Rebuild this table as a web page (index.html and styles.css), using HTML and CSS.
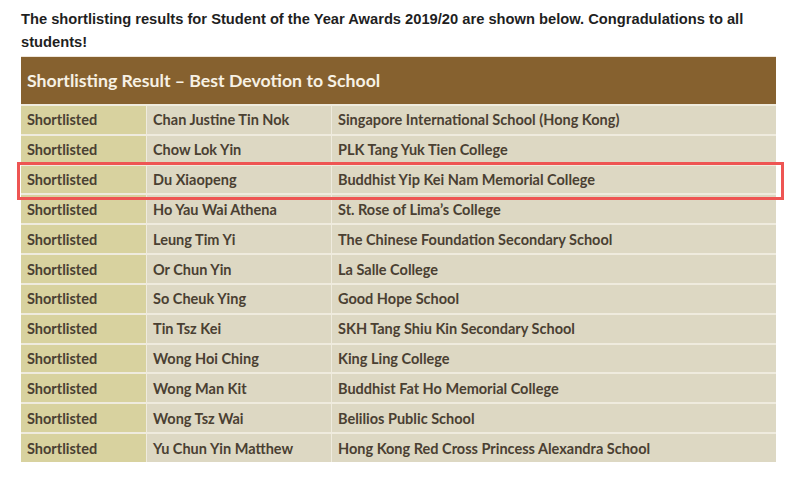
FILE: index.html
```html
<!DOCTYPE html>
<html>
<head>
<meta charset="utf-8">
<link rel="stylesheet" href="styles.css">
</head>
<body>
<p class="intro">The shortlisting results for Student of the Year Awards 2019/20 are shown below. Congradulations to all students!</p>
<div class="result">
  <div class="title">Shortlisting Result – Best Devotion to School</div>
  <div class="row"><div class="c1">Shortlisted</div><div class="c2">Chan Justine Tin Nok</div><div class="c3">Singapore International School (Hong Kong)</div></div>
  <div class="row"><div class="c1">Shortlisted</div><div class="c2">Chow Lok Yin</div><div class="c3">PLK Tang Yuk Tien College</div></div>
  <div class="row highlight"><div class="c1">Shortlisted</div><div class="c2">Du Xiaopeng</div><div class="c3">Buddhist Yip Kei Nam Memorial College</div></div>
  <div class="row"><div class="c1">Shortlisted</div><div class="c2">Ho Yau Wai Athena</div><div class="c3">St. Rose of Lima’s College</div></div>
  <div class="row"><div class="c1">Shortlisted</div><div class="c2">Leung Tim Yi</div><div class="c3">The Chinese Foundation Secondary School</div></div>
  <div class="row"><div class="c1">Shortlisted</div><div class="c2">Or Chun Yin</div><div class="c3">La Salle College</div></div>
  <div class="row"><div class="c1">Shortlisted</div><div class="c2">So Cheuk Ying</div><div class="c3">Good Hope School</div></div>
  <div class="row"><div class="c1">Shortlisted</div><div class="c2">Tin Tsz Kei</div><div class="c3">SKH Tang Shiu Kin Secondary School</div></div>
  <div class="row"><div class="c1">Shortlisted</div><div class="c2">Wong Hoi Ching</div><div class="c3">King Ling College</div></div>
  <div class="row"><div class="c1">Shortlisted</div><div class="c2">Wong Man Kit</div><div class="c3">Buddhist Fat Ho Memorial College</div></div>
  <div class="row"><div class="c1">Shortlisted</div><div class="c2">Wong Tsz Wai</div><div class="c3">Belilios Public School</div></div>
  <div class="row"><div class="c1">Shortlisted</div><div class="c2">Yu Chun Yin Matthew</div><div class="c3">Hong Kong Red Cross Princess Alexandra School</div></div>
</div>
</body>
</html>
```
FILE: styles.css
```css
html, body {
  margin: 0;
  padding: 0;
  background: #ffffff;
}
body {
  padding: 8px 23px 0 21px;
}
.intro {
  margin: 0;
  font-family: "Liberation Sans", Arial, sans-serif;
  font-weight: bold;
  font-size: 14.7px;
  line-height: 23px;
  color: #1f1f1f;
  width: 740px;
}
.result {
  margin-top: 2px;
  width: 755px;
  font-family: Lato, "Open Sans", sans-serif;
  font-weight: bold;
  color: #4a4032;
}
.title {
  background: #86612f;
  color: #f7f1e4;
  height: 48px;
  display: flex;
  align-items: center;
  padding-left: 6px;
  font-size: 17.7px;
  border-top: 1px solid #efe6da;
  box-sizing: border-box;
}
.row {
  display: grid;
  grid-template-columns: 125px 185px 1fr;
  height: 29.83px;
  box-sizing: border-box;
  border-top: 2px solid #efebde;
  font-size: 14.5px;
}
.row > div {
  display: flex;
  align-items: center;
  padding-left: 6px;
  white-space: nowrap;
  background: #ddd8c3;
}
.row > .c1 {
  background: #d8d29f;
}
.row > .c2,
.row > .c3 {
  border-left: 1px solid #efebde;
}
.highlight {
  position: relative;
}
.highlight::after {
  content: "";
  position: absolute;
  left: -4px;
  right: -8px;
  top: -4px;
  bottom: -7px;
  border: 3px solid #ee5553;
  pointer-events: none;
}
```
